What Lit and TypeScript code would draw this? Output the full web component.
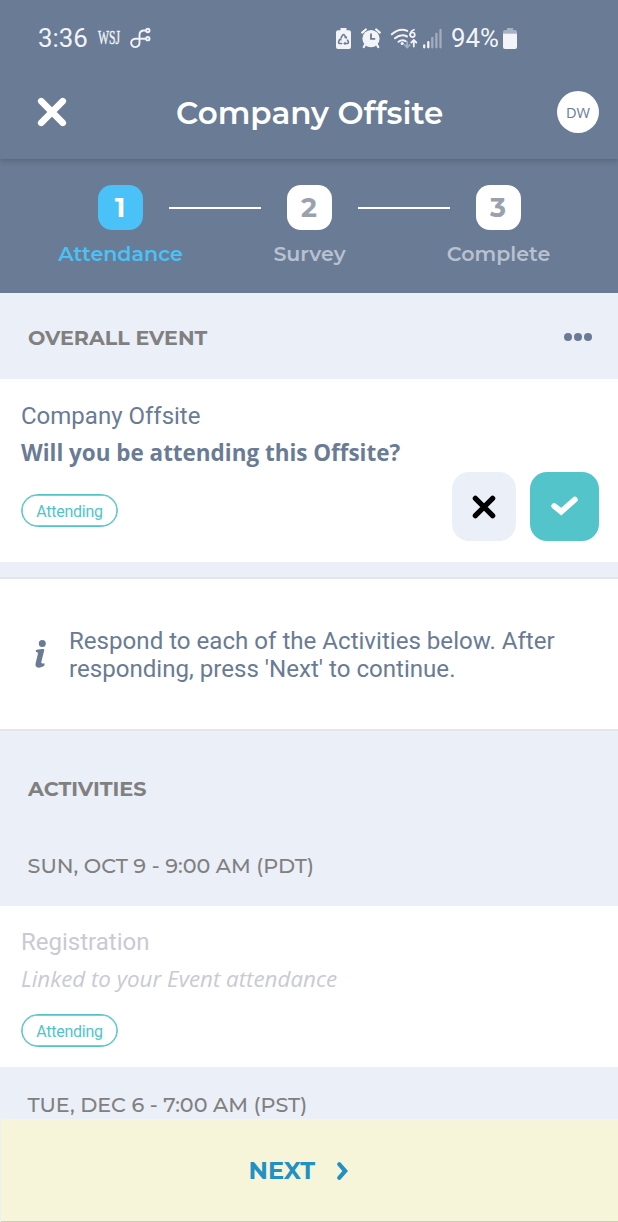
import { LitElement, html, css } from "lit";
import { customElement } from "lit/decorators.js";

const cross = (cls: string) => html`<svg class=${cls} viewBox="0 0 30 30"><path d="M4.2 4.2 25.8 25.8M25.8 4.2 4.2 25.8" fill="none" stroke="currentColor" stroke-width="6.6" stroke-linecap="round"/></svg>`;

const steps = [
  { n: "1", label: "Attendance", cls: "step active" },
  { n: "2", label: "Survey", cls: "step" },
  { n: "3", label: "Complete", cls: "step" },
];

@customElement("app-root")
export class AppRoot extends LitElement {
  static styles = css`
    :host { display: flex; flex-direction: column; width: 618px; height: 1222px; overflow: hidden; background: #ebeff8; font-family: Roboto, sans-serif; color: #697b95; }
    * { box-sizing: border-box; }
    svg { display: block; flex: none; overflow: visible; }
    .m { font-family: Montserrat, Inter, sans-serif; white-space: nowrap; }
    .status { height: 76px; flex: none; background: #697b95; color: #f2f4f8; display: flex; align-items: center; padding: 0 101px 0 38px; font-size: 25.8px; line-height: 76px; }
    .clock { width: 60px; }
    .branch { margin-left: 10px; }
    .sys { margin-left: auto; display: flex; align-items: center; }
    .alarm { margin-left: 10px; }
    .wifi { margin-left: 9px; }
    .signal { margin-left: 5px; }
    .pct { width: 48px; margin: 0 4px 0 9px; }
    .head { height: 83px; flex: none; background: #697b95; display: flex; align-items: center; justify-content: space-between; padding: 0 19px 13px 36.5px; color: #fff; box-shadow: 0 2px 5px rgba(60, 70, 85, .4); clip-path: inset(0 0 -8px 0); z-index: 1; }
    .x1 { width: 30px; height: 30px; margin-top: 1px; }
    .title { font-size: 31px; font-weight: 600; line-height: 40px; margin: 3px 4px 0 0; }
    .avatar { width: 42px; height: 42px; margin-top: 1px; border-radius: 50%; background: #fff; color: #697b95; text-align: center; font: 14.6px/43px "Open Sans", sans-serif; }
    .steps { height: 134px; flex: none; background: #697b95; display: flex; justify-content: center; padding-top: 26px; }
    .step { width: 45px; display: flex; flex-direction: column; align-items: center; color: #b9c1d0; }
    .num { width: 45px; height: 45px; border-radius: 14px; background: #fff; color: #9aa1ad; text-align: center; font: 700 27px/45px Montserrat, Inter, sans-serif; }
    .lab { font-size: 20.6px; font-weight: 600; line-height: 26px; margin: 11px -1px 0 0; }
    .active { color: #4ac2f7; }
    .active .num { background: #4ac2f7; color: #fff; }
    .line { width: 92px; height: 2px; background: #fff; margin: 22px 26px 0; }
    .sec { height: 86px; flex: none; padding: 2px 26px 0 28px; display: flex; align-items: center; justify-content: space-between; color: #808080; }
    .sec .m, .acts .m { font-size: 20.6px; font-weight: 700; line-height: 26px; }
    .sec .m { margin-top: 1px; }
    .dots { width: 28px; height: 8px; color: #697b95; }
    .card { height: 183px; flex: none; background: #fff; padding: 22px 19px 0 21px; display: flex; justify-content: space-between; }
    .name { font-size: 24px; line-height: 30px; }
    .ask { font: 700 22.45px/36px "Open Sans", sans-serif; margin-top: 4px; }
    .pill { width: 97px; height: 33px; border: 1px solid #50c3c9; box-shadow: inset 0 0 0 .7px #50c3c9; border-radius: 17px; color: #50c3c9; font-size: 16px; letter-spacing: -.25px; line-height: 33px; text-align: center; }
    .card .pill { margin-top: 23px; }
    .btns { display: flex; gap: 14px; padding-top: 71px; }
    .btn { width: 64px; height: 69px; border-radius: 17px; background: #ebeff8; color: #000; display: grid; place-items: center; }
    .yes { width: 69px; background: #52c4ca; color: #fff; }
    .x2 { width: 24px; height: 24px; }
    .check { width: 27px; height: 20px; margin-bottom: 1px; }
    .info { margin-top: 15px; height: 154px; flex: none; background: #fff; border: solid #e4e6ea; border-width: 2px 0; display: flex; padding: 48px 0 0 35px; font-size: 24.1px; line-height: 28.4px; white-space: nowrap; }
    .ii { width: 11px; height: 28px; margin: 13px 23px 0 0; }
    .acts { height: 116px; flex: none; padding: 45px 0 0 28px; color: #808080; }
    .acts .m { font-size: 20.75px; }
    .date { flex: none; padding-left: 27.6px; color: #808080; height: 59px; font-size: 20.7px; font-weight: 500; line-height: 38px; }
    .reg { height: 161px; flex: none; background: #fff; padding: 21px 0 0 21px; color: #c9cad2; }
    .link { font: italic 22.35px/36px "Open Sans", sans-serif; margin-top: 4px; }
    .reg .pill { margin-top: 17px; }
    .last { height: 52px; padding-top: 19px; }
    .next { height: 103px; flex: none; margin-left: 1px; background: #f7f5d9; border-bottom: 1px solid #cfcdb8; color: #2191c4; display: flex; align-items: center; padding: 2px 0 0 247.5px; gap: 22px; }
    .next .m { font-size: 24px; font-weight: 700; line-height: 30px; }
  `;

  render() {
    return html`
      <div class="status">
        <span class="clock">3:36</span>
        <svg width="22" height="14" viewBox="0 0 22 14"><text x="0" y="13" font-family="Liberation Serif, serif" font-size="18" fill="currentColor" stroke="currentColor" stroke-width=".4" textLength="22" lengthAdjust="spacingAndGlyphs">WSJ</text></svg>
        <svg class="branch" width="21" height="20" viewBox="130 28.5 21 20" fill="none" stroke="currentColor" stroke-width="1.9"><path d="M145.8 31H144Q139.500 31 139.500 35.600V43A4.200 4.200 0 1 1 135.300 39.200H145.800"/><circle cx="147.800" cy="31" r="1.700"/><circle cx="147.800" cy="39.200" r="1.700"/></svg>
        <div class="sys">
          <svg width="15" height="21" viewBox="0 0 15 21"><path fill="currentColor" d="M4.500 0h6v2.200H13q2 0 2 2V19q0 2-2 2H2q-2 0-2-2V4.200q0-2 2-2h2.500z"/><g fill="none" stroke="#697b95" stroke-width="1.500" stroke-linejoin="round"><path d="M4.900 10 6.600 7.200Q7.500 6 8.400 7.200L9.700 9.400M11.200 11.600 12.300 13.500Q12.900 15.200 11.300 15.400H8.800M6.200 15.400H3.700Q2.100 15.200 2.700 13.500L3.800 11.600"/></g><path fill="#697b95" d="M11.200 8.200 10.700 11 8 9.600zM9.400 13.500v3.800L7.200 15.400zM2.300 11.300l3-1.300.3 2.800z"/></svg>
          <svg class="alarm" width="20" height="20" viewBox="0 0 20 20"><circle cx="10" cy="10.600" r="8.600" fill="currentColor"/><path d="M1.200 4.600 4.800 1.500M18.800 4.600 15.200 1.500M4.200 16.500 2.800 19M15.800 16.500l1.400 2.500" stroke="currentColor" stroke-width="2.300" stroke-linecap="round"/><path d="M10 5.500v5.300h4.200" fill="none" stroke="#697b95" stroke-width="1.800"/></svg>
          <svg class="wifi" width="27" height="21" viewBox="390 27.500 27 21" fill="none" stroke="currentColor" stroke-width="2" stroke-linecap="round"><path d="M391.800 33.800Q399.500 27 407.300 30.400M395 37.800Q401 33 407 36M398.500 41.300Q402 38.700 405.600 40.600"/><circle cx="402.200" cy="43" r="1.600" fill="currentColor" stroke="none"/><path d="M414 29.200Q410.200 30.600 410.200 34.400" stroke-width="1.700"/><circle cx="412.500" cy="34.300" r="2.300" stroke-width="1.700"/><path d="M413.800 46V40.200M411.300 42l2.500-2.500 2.500 2.500" stroke-width="1.800"/><path d="M407.200 41.500v5M404.800 44.500l2.400 2.500 2.400-2.500" stroke-width="1.800" opacity=".45"/></svg>
          <svg class="signal" width="20" height="21" viewBox="422 27 20 21" fill="none" stroke="currentColor" stroke-width="2.300" stroke-linecap="round"><path d="M424.200 44.500v1.800M428.300 41.200v5.100"/><path d="M432.300 37v9.300M436.400 33v13.300M440.500 29v17.300" opacity=".42"/></svg>
          <span class="pct">94%</span>
          <svg width="14" height="21" viewBox="0 0 14 21" fill="currentColor"><path opacity=".45" d="M4 0h6v2h2q2 0 2 2v1.500H0V4q0-2 2-2h2z"/><path d="M0 5.500h14V19q0 2-2 2H2q-2 0-2-2z"/></svg>
        </div>
      </div>
      <div class="head">${cross("x1")}<span class="m title">Company Offsite</span><span class="avatar">DW</span></div>
      <div class="steps">
        ${steps.map((s, i) => html`${i ? html`<i class="line"></i>` : ""}<div class=${s.cls}><span class="num">${s.n}</span><span class="m lab">${s.label}</span></div>`)}
      </div>
      <div class="sec"><span class="m">OVERALL EVENT</span><svg class="dots" viewBox="0 0 28 8" fill="currentColor"><circle cx="4" cy="4" r="4"/><circle cx="14" cy="4" r="4"/><circle cx="24" cy="4" r="4"/></svg></div>
      <div class="card">
        <div><div class="name">Company Offsite</div><div class="ask">Will you be attending this Offsite?</div><div class="pill">Attending</div></div>
        <div class="btns"><div class="btn">${cross("x2")}</div><div class="btn yes"><svg class="check" viewBox="0 0 27 20"><path d="M3.200 10 10.200 15.600 23.800 3.600" fill="none" stroke="#fff" stroke-width="5.800" stroke-linecap="round"/></svg></div></div>
      </div>
      <div class="info"><svg class="ii" viewBox="0 0 11 28" fill="currentColor"><circle cx="7.300" cy="3.400" r="3.500"/><path d="M1 10C4 9.200 6.500 9 8.700 9L9.300 10 6.300 22C6 23.200 6.800 23.700 9.600 23.200L9.400 25.500C7 27.300 4.500 28 2.500 27.500.500 27 .200 25 .700 23L2.900 13.800C3.200 12.500 2.500 12 .800 12Z"/></svg><div>Respond to each of the Activities below. After<br>responding, press 'Next' to continue.</div></div>
      <div class="acts"><span class="m">ACTIVITIES</span></div>
      <div class="date m">SUN, OCT 9 - 9:00 AM (PDT)</div>
      <div class="reg"><div class="name">Registration</div><div class="link">Linked to your Event attendance</div><div class="pill">Attending</div></div>
      <div class="date m last">TUE, DEC 6 - 7:00 AM (PST)</div>
      <div class="next"><span class="m">NEXT</span><svg width="11" height="18" viewBox="0 0 11 18"><path d="M2.200 2.200 8.200 9 2.200 15.800" fill="none" stroke="currentColor" stroke-width="4.200" stroke-linecap="round"/></svg></div>`;
  }
}
